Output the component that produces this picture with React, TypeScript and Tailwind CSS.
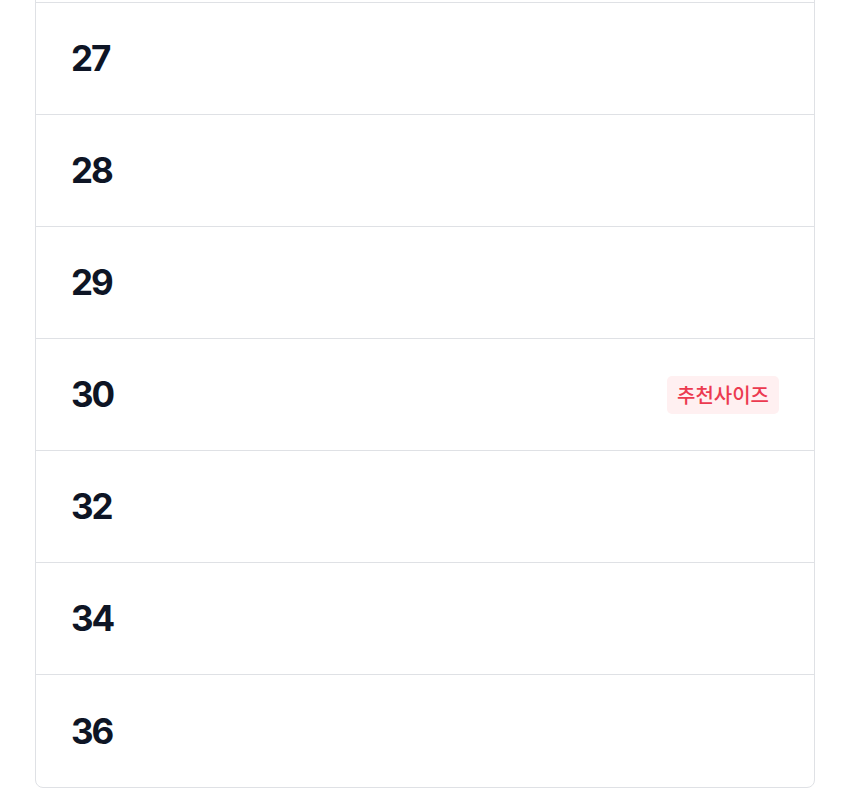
import React from "react";

const sizes: { label: string; recommended?: boolean }[] = [
  { label: "27" },
  { label: "28" },
  { label: "29" },
  { label: "30", recommended: true },
  { label: "32" },
  { label: "34" },
  { label: "36" },
];

export default function App() {
  return (
    <div className="min-h-[808px] bg-white pb-[20px]" style={{ fontFamily: "Inter, 'Noto Sans CJK KR', sans-serif" }}>
      <div className="mx-[35px] -mt-[110px] overflow-hidden rounded-b-[8px] border border-[#dfe1e5] bg-white">
        <div className="h-[112px] border-b border-[#dfe1e5]" />
        {sizes.map((s, i) => (
          <div
            key={s.label}
            className={`flex h-[112px] items-center justify-between pl-[35px] pr-[35px] ${
              i < sizes.length - 1 ? "border-b border-[#dfe1e5]" : ""
            }`}
          >
            <span className="text-[35px] font-bold tracking-[-0.06em] text-[#0e1525]">{s.label}</span>
            {s.recommended && (
              <span
                className="flex h-[38px] items-center rounded-[5px] bg-[#fff0f1] px-[10px] text-[20px] font-medium text-[#ec3a50]"
                style={{ fontFamily: "'Noto Sans CJK KR', sans-serif" }}
              >
                추천사이즈
              </span>
            )}
          </div>
        ))}
      </div>
    </div>
  );
}
